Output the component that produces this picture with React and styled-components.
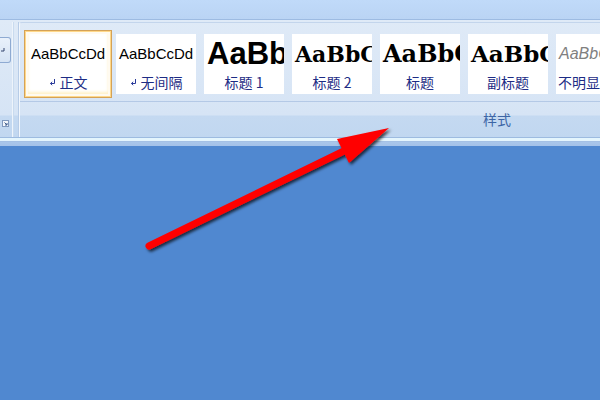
import React from 'react'
import styled, { createGlobalStyle } from 'styled-components'

const GlobalStyle = createGlobalStyle`
	html, body {
		margin: 0;
		padding: 0;
		background: #5088d0;
		font-family: 'Liberation Sans', 'Noto Sans CJK SC', sans-serif;
	}
`

const Page = styled.div`
	position: relative;
	width: 600px;
	height: 400px;
	overflow: hidden;
	background: #5088d0;
`

const Ribbon = styled.div`
	overflow: hidden;
	background: #bcd6f6;
`

const TabStrip = styled.div`
	height: 19px;
	background: linear-gradient(#c0daf9, #bad4f4);
	border-bottom: 1px solid #9dbbe2;
`

const Panel = styled.div`
	display: flex;
	height: 117px;
	background: linear-gradient(
		#dfeaf7 0px,
		#d6e4f5 95px,
		#c4d9f1 96px,
		#c1d7f0 117px
	);
	border-bottom: 1px solid #9dbbe0;
`

const BottomEdge = styled.div`
	height: 8px;
	background: linear-gradient(#e4f5fd 0px, #e4f5fd 3px, #9fbbe0 3px, #a9c6ea 4px, #a4c2e9 8px);
`

const LeftGroup = styled.div`
	width: 12px;
	flex: none;
	display: flex;
	flex-direction: column;
	padding-top: 17px;
`

const CutButton = styled.div`
	width: 9px;
	height: 24px;
	border: 1px solid #8eaad2;
	border-left: none;
	border-radius: 0 3px 3px 0;
	background: linear-gradient(#e9f1fb, #d5e3f4);
	display: flex;
	align-items: center;
	padding-left: 1px;
	box-sizing: content-box;
`

const Launcher = styled.svg`
	margin-top: auto;
	margin-bottom: 10px;
	margin-left: 2px;
`

const Separator = styled.div`
	width: 5px;
	flex: none;
	margin-top: 2px;
	border-left: 1px solid #eef4fb;
	border-right: 1px solid #b7cce7;
	box-shadow: inset 1px 0 0 #c9dbef;
`

const StyleGroup = styled.div`
	width: 954px;
	flex: none;
	display: flex;
	flex-direction: column;
	margin-top: 2px;
	border-left: 1px solid #f2f7fd;
	border-top: 1px solid #c3d5ec;
	border-radius: 3px 0 0 0;
`

const Gallery = styled.div`
	height: 79px;
	display: flex;
	gap: 8px;
	padding: 11px 0 0 8px;
	box-sizing: border-box;
	border-bottom: 1px solid #b4c9e6;
`

const Swatch = styled.div`
	width: 80px;
	height: 60px;
	flex: none;
	display: flex;
	flex-direction: column;
	background: #fff;
	overflow: hidden;
	box-shadow: ${p =>
		p.$selected
			? '0 0 0 2px #fffaf0, 0 0 0 3px #ffd889, 0 0 0 4px #d4a257, inset 0 -2px 3px #fff1c8'
			: 'none'};
`

const sampleFonts = {
	normal: `font: 15px 'Liberation Sans', sans-serif; color: #000;`,
	h1: `font: bold 31px 'Liberation Sans', sans-serif; color: #000;`,
	h2: `font: bold 22px 'DejaVu Serif', serif; color: #000;`,
	title: `font: bold 24px 'DejaVu Serif', serif; color: #000;`,
	subtitle: `font: bold 23px 'DejaVu Serif', serif; color: #000;`,
	subtle: `font: italic 16px 'Liberation Sans', sans-serif; color: #808080;`,
}

const Sample = styled.div`
	height: 38px;
	display: flex;
	align-items: center;
	padding: 1px 2px 0 3px;
	box-sizing: border-box;
	white-space: nowrap;
	overflow: hidden;
	${p => sampleFonts[p.$kind]}
`

const Label = styled.div`
	height: 20px;
	display: flex;
	align-items: center;
	justify-content: ${p => (p.$left ? 'flex-start' : 'center')};
	gap: 4px;
	padding-left: ${p => (p.$left ? '2px' : '0')};
	white-space: nowrap;
	overflow: hidden;
	font: 14px 'Noto Sans CJK SC', sans-serif;
	color: #1d2c85;
`

const Caption = styled.div`
	flex: 1;
	display: flex;
	align-items: center;
	justify-content: center;
	padding-bottom: 1px;
	font: 14px 'Noto Sans CJK SC', sans-serif;
	color: #3d66a6;
`

const Overlay = styled.svg`
	position: absolute;
	left: 0;
	top: 0;
	pointer-events: none;
`

const ReturnMark = () => (
	<svg width='7' height='8' viewBox='0 0 7 8'>
		<path d='M5.5 1 V5.5 H1.5 M3.2 3.8 L1.4 5.5 L3.2 7.2' fill='none' stroke='#2a3a9a' strokeWidth='1' />
	</svg>
)

const items = [
	{ sample: 'AaBbCcDd', label: '正文', mark: true, selected: true, kind: 'normal' },
	{ sample: 'AaBbCcDd', label: '无间隔', mark: true, kind: 'normal' },
	{ sample: 'AaBb', label: '标题 1', kind: 'h1' },
	{ sample: 'AaBbC', label: '标题 2', kind: 'h2' },
	{ sample: 'AaBbC', label: '标题', kind: 'title' },
	{ sample: 'AaBbC', label: '副标题', kind: 'subtitle' },
	{ sample: 'AaBbC', label: '不明显强调', kind: 'subtle', left: true },
]

export default function App() {
	return (
		<Page>
			<GlobalStyle />
			<Ribbon>
				<TabStrip />
				<Panel>
					<LeftGroup>
						<CutButton>
							<svg width='4' height='5' viewBox='0 0 4 5'>
								<path d='M3 0 V3 H0' fill='none' stroke='#33456e' strokeWidth='1' />
							</svg>
						</CutButton>
						<Launcher width='7' height='7' viewBox='0 0 7 7'>
							<rect x='0.5' y='0.5' width='6' height='6' fill='#f4f8fd' stroke='#7f98bd' />
							<path d='M2.5 2.5 L5 5 M5 3 V5 H3' fill='none' stroke='#3e5c8c' strokeWidth='1' />
						</Launcher>
					</LeftGroup>
					<Separator />
					<StyleGroup>
						<Gallery>
							{items.map(it => (
								<Swatch key={it.label} $selected={it.selected}>
									<Sample $kind={it.kind}>{it.sample}</Sample>
									<Label $left={it.left}>
										{it.mark && <ReturnMark />}
										<span>{it.label}</span>
									</Label>
								</Swatch>
							))}
						</Gallery>
						<Caption>样式</Caption>
					</StyleGroup>
				</Panel>
				<BottomEdge />
			</Ribbon>
			<Overlay width='600' height='400' viewBox='0 0 600 400'>
				<defs>
					<filter id='shade' x='-20%' y='-20%' width='140%' height='140%'>
						<feDropShadow dx='2' dy='2' stdDeviation='1.6' floodColor='#000' floodOpacity='0.7' />
					</filter>
				</defs>
				<g filter='url(#shade)'>
					<line x1='149' y1='246' x2='350' y2='148' stroke='#ff0000' strokeWidth='7' strokeLinecap='round' />
					<polygon points='389,128 337,139 349,163' fill='#ff0000' />
				</g>
			</Overlay>
		</Page>
	)
}
